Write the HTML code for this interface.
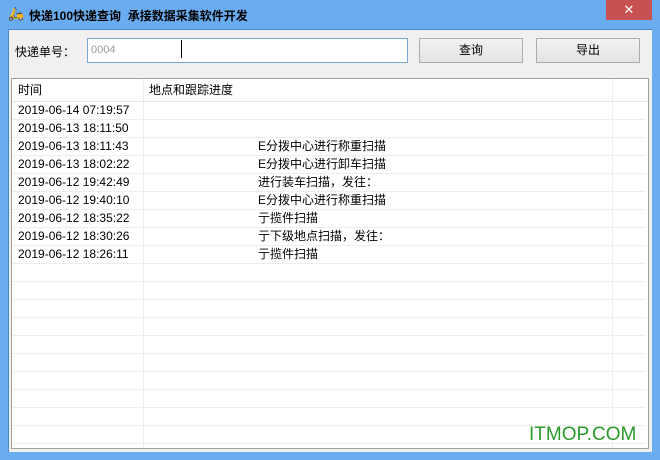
<!DOCTYPE html><html><head><meta charset="utf-8"><style>
body{margin:0;width:660px;height:460px;overflow:hidden;background:#6aacf0;font-family:"Liberation Sans","Noto Sans CJK SC",sans-serif;position:relative}
.a{position:absolute}
#client{left:8px;top:29px;width:644px;height:423px;background:#f0f0f0;border:1px solid #4a86c8;box-sizing:border-box;border-width:1px 0 0 1px}
.btn{background:linear-gradient(#f2f2f2,#e3e3e3);border:1px solid #acacac;box-sizing:border-box;font-size:12px;text-align:center;line-height:22px;color:#000}
.row{position:absolute;left:0;width:634px;height:18px;border-bottom:1px solid #ededed;box-sizing:border-box;font-size:12px;line-height:17px}
.row span{position:absolute;left:6px}
.row b{position:absolute;left:246px;font-weight:normal}
</style></head><body>
<div class="a" style="left:8px;top:6px;font-size:13px">🛵</div>
<div class="a" style="left:29px;top:7px;font-size:12px;font-weight:bold;color:#000">快递100快递查询&nbsp; 承接数据采集软件开发</div>
<div class="a" style="left:606px;top:0;width:46px;height:20px;background:#c75050;color:#fff;text-align:center;font-size:13px;line-height:20px">✕</div>
<div class="a" id="client"></div>
<div class="a" style="left:15px;top:43px;font-size:12px">快递单号：</div>
<div class="a" style="left:87px;top:38px;width:321px;height:25px;background:#fff;border:1px solid #7aa7d6;box-sizing:border-box;font-size:11px;color:#999;line-height:22px;padding-left:3px">0004</div>
<div class="a" style="left:181px;top:40px;width:1px;height:18px;background:#000"></div>
<div class="a btn" style="left:419px;top:38px;width:104px;height:25px">查询</div>
<div class="a btn" style="left:536px;top:38px;width:104px;height:25px">导出</div>
<div class="a" style="left:11px;top:78px;width:638px;height:371px;background:#fff;border:1px solid #a0a0a0;box-sizing:border-box;overflow:hidden">
<div class="a" style="left:0;top:0;width:636px;height:22px;border-bottom:1px solid #e5e5e5;font-size:12px;line-height:22px">
<span class="a" style="left:6px">时间</span><span class="a" style="left:137px">地点和跟踪进度</span></div>
<div class="a" style="left:131px;top:0;width:1px;height:371px;background:#ececec"></div>
<div class="a" style="left:600px;top:0;width:1px;height:371px;background:#ececec"></div>
<div class="a" style="left:0;top:23px">
<div class="row" style="top:0"><span>2019-06-14 07:19:57</span></div>
<div class="row" style="top:18px"><span>2019-06-13 18:11:50</span></div>
<div class="row" style="top:36px"><span>2019-06-13 18:11:43</span><b>E分拨中心进行称重扫描</b></div>
<div class="row" style="top:54px"><span>2019-06-13 18:02:22</span><b>E分拨中心进行卸车扫描</b></div>
<div class="row" style="top:72px"><span>2019-06-12 19:42:49</span><b>进行装车扫描，发往：</b></div>
<div class="row" style="top:90px"><span>2019-06-12 19:40:10</span><b>E分拨中心进行称重扫描</b></div>
<div class="row" style="top:108px"><span>2019-06-12 18:35:22</span><b>亍揽件扫描</b></div>
<div class="row" style="top:126px"><span>2019-06-12 18:30:26</span><b>亍下级地点扫描，发往：</b></div>
<div class="row" style="top:144px"><span>2019-06-12 18:26:11</span><b>亍揽件扫描</b></div>
<div class="row" style="top:162px"></div><div class="row" style="top:180px"></div><div class="row" style="top:198px"></div><div class="row" style="top:216px"></div><div class="row" style="top:234px"></div><div class="row" style="top:252px"></div><div class="row" style="top:270px"></div><div class="row" style="top:288px"></div><div class="row" style="top:306px"></div><div class="row" style="top:324px"></div><div class="row" style="top:342px"></div>
</div></div>
<div class="a" style="left:529px;top:424px;font-size:19px;color:#2a9a2a">ITMOP.COM</div>
</body></html>
